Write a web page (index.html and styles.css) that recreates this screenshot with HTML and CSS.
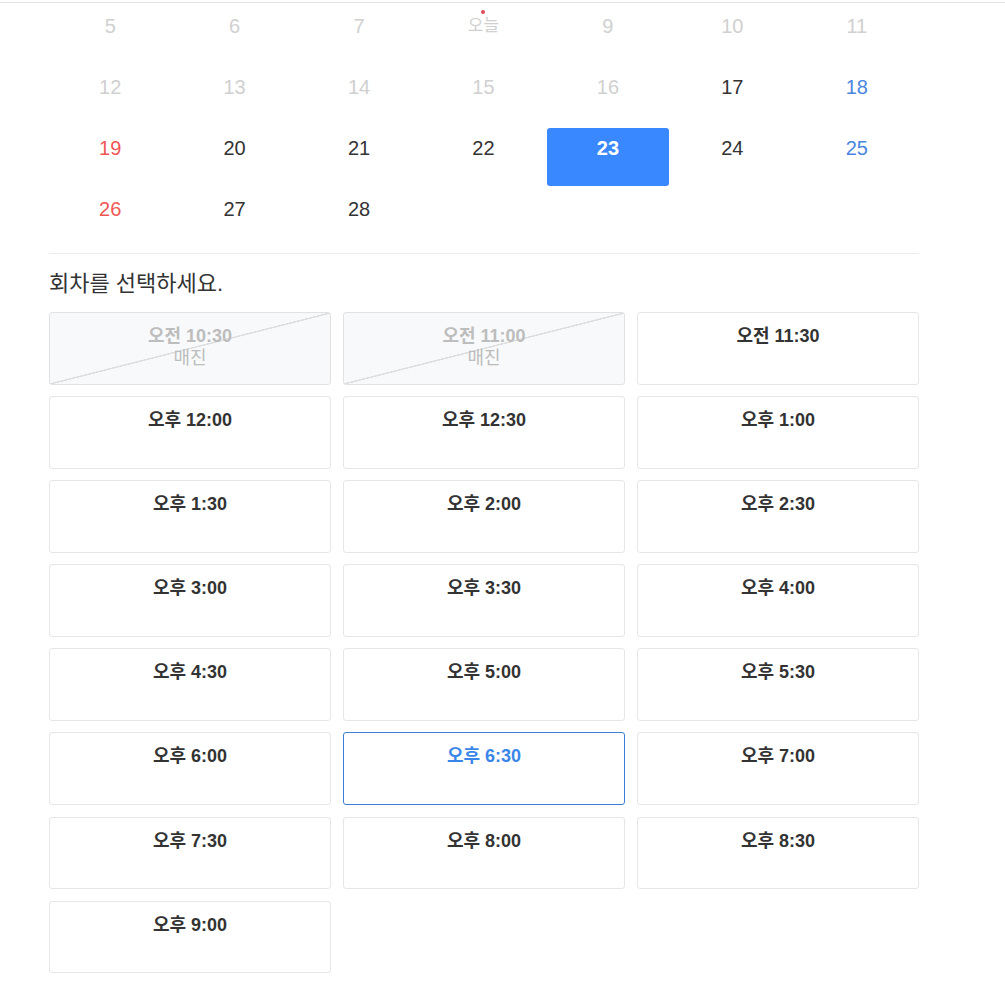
FILE: index.html
```html
<!DOCTYPE html>
<html lang="ko">
<head>
<meta charset="utf-8">
<link rel="stylesheet" href="styles.css">
</head>
<body>
<div class="topline"></div>
<div class="wrap">
  <div class="cal">
    <div class="day past">5</div>
    <div class="day past">6</div>
    <div class="day past">7</div>
    <div class="day past today"><span class="dot"></span>오늘</div>
    <div class="day past">9</div>
    <div class="day past">10</div>
    <div class="day past">11</div>

    <div class="day past">12</div>
    <div class="day past">13</div>
    <div class="day past">14</div>
    <div class="day past">15</div>
    <div class="day past">16</div>
    <div class="day">17</div>
    <div class="day sat">18</div>

    <div class="day sun">19</div>
    <div class="day">20</div>
    <div class="day">21</div>
    <div class="day">22</div>
    <div class="day selected">23</div>
    <div class="day">24</div>
    <div class="day sat">25</div>

    <div class="day sun">26</div>
    <div class="day">27</div>
    <div class="day">28</div>
  </div>
  <div class="divider"></div>
  <h2 class="title">회차를 선택하세요.</h2>
  <div class="slots">
    <div class="slot soldout"><div class="time">오전 10:30</div><div class="sub">매진</div></div>
    <div class="slot soldout"><div class="time">오전 11:00</div><div class="sub">매진</div></div>
    <div class="slot"><div class="time">오전 11:30</div></div>
    <div class="slot"><div class="time">오후 12:00</div></div>
    <div class="slot"><div class="time">오후 12:30</div></div>
    <div class="slot"><div class="time">오후 1:00</div></div>
    <div class="slot"><div class="time">오후 1:30</div></div>
    <div class="slot"><div class="time">오후 2:00</div></div>
    <div class="slot"><div class="time">오후 2:30</div></div>
    <div class="slot"><div class="time">오후 3:00</div></div>
    <div class="slot"><div class="time">오후 3:30</div></div>
    <div class="slot"><div class="time">오후 4:00</div></div>
    <div class="slot"><div class="time">오후 4:30</div></div>
    <div class="slot"><div class="time">오후 5:00</div></div>
    <div class="slot"><div class="time">오후 5:30</div></div>
    <div class="slot"><div class="time">오후 6:00</div></div>
    <div class="slot active"><div class="time">오후 6:30</div></div>
    <div class="slot"><div class="time">오후 7:00</div></div>
    <div class="slot"><div class="time">오후 7:30</div></div>
    <div class="slot"><div class="time">오후 8:00</div></div>
    <div class="slot"><div class="time">오후 8:30</div></div>
    <div class="slot"><div class="time">오후 9:00</div></div>
  </div>
</div>
</body>
</html>
```

FILE: styles.css
```css
html, body {
  margin: 0;
  padding: 0;
  background: #fff;
}
body {
  font-family: "Liberation Sans", "Noto Sans CJK KR", sans-serif;
  color: #333;
}
.topline {
  height: 2px;
  border-bottom: 1px solid #e4e4e4;
}
.wrap {
  width: 870px;
  margin-left: 49px;
  padding-top: 3px;
}
.cal {
  width: 869px;
  display: grid;
  grid-template-columns: repeat(7, 1fr);
  grid-auto-rows: 58px;
  column-gap: 2px;
  row-gap: 3px;
}
.day {
  position: relative;
  text-align: center;
  font-size: 20px;
  line-height: 40px;
  color: #333;
  border-radius: 3px;
}
.day.past { color: #d0d0d0; }
.day.today { font-size: 17px; }
.day.sat { color: #4a86e0; }
.day.sun { color: #f05656; }
.day.selected {
  background: #3a88ff;
  color: #fff;
  font-weight: bold;
}
.dot {
  position: absolute;
  left: 50%;
  top: 4px;
  width: 4px;
  height: 4px;
  margin-left: -2px;
  border-radius: 50%;
  background: #e04a5a;
}
.divider {
  height: 1px;
  background: #ececec;
  margin-top: 6px;
}
.title {
  margin: 15px 0 0;
  font-size: 22px;
  font-weight: normal;
  line-height: 30px;
  color: #333;
}
.slots {
  margin-top: 13px;
  display: grid;
  grid-template-columns: repeat(3, 1fr);
  column-gap: 12px;
  row-gap: 11.3px;
  width: 870px;
}
.slot {
  box-sizing: border-box;
  height: 72.8px;
  border: 1px solid #e6e6e6;
  border-radius: 3px;
  padding-top: 12px;
  text-align: center;
}
.time {
  font-size: 18px;
  font-weight: bold;
  line-height: 22px;
  color: #333;
}
.sub {
  font-size: 18px;
  line-height: 22px;
  color: #bdbdbd;
}
.slot.soldout {
  background-color: #f8f9fa;
  background-image: linear-gradient(to bottom right, transparent calc(50% - 1px), #dedede calc(50% - 0.5px), #dedede calc(50% + 0.5px), transparent calc(50% + 1px));
  border-color: #e2e2e2;
}
.slot.soldout .time { color: #bdbdbd; }
.slot.active {
  border-color: #3a7fd5;
}
.slot.active .time { color: #3a86e8; }
```
